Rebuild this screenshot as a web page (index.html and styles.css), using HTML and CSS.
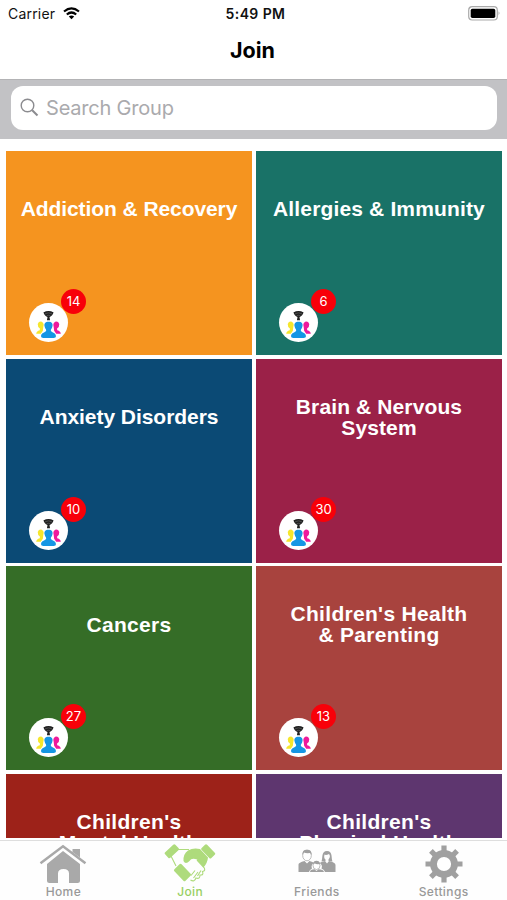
FILE: index.html
```html
<!DOCTYPE html>
<html lang="en">
<head>
<meta charset="utf-8">
<title>Join</title>
<link rel="stylesheet" href="styles.css">
</head>
<body>
<svg class="defs" aria-hidden="true">
  <symbol id="group" viewBox="0 0 38 38">
    <path fill="#222" d="M14 9.300Q19 6.500 24 9.300L22.700 11.800Q21.500 13.300 20 13.600L20.500 16.800H17.500L18 13.600Q16.500 13.300 15.300 11.800Z"/>
    <path d="M15.500 10.600Q19 8.600 22.500 10.600M17.200 12.400Q19 11.500 20.800 12.400" fill="none" stroke="#666" stroke-width=".6"/>
    <path fill="#f5e62d" d="M8.500 20.500Q9.500 17.500 12.500 18.200Q15 19.700 14 23L13.500 27L11.500 30H7Q7 27.500 10.500 26.500Q11.500 25 9 23.500Z"/>
    <path fill="#ee1a9c" d="M29.500 20.500Q28.500 17.500 25.500 18.200Q23 19.700 24 23L24.500 27L26.500 30H31Q31 27.500 27.500 26.500Q26.500 25 29 23.500Z"/>
    <path fill="#1596e4" d="M19 18.200C22.200 18.200 23.400 20 22.900 22.500C22.700 24.500 21.500 25.500 21.200 26.500C21.500 29 26.300 28.300 26.300 32.500Q26.300 34 24 34H14Q11.700 34 11.700 32.500C11.700 28.300 16.500 29 16.800 26.500C16.500 25.500 15.300 24.500 15.100 22.500C14.600 20 15.800 18.200 19 18.200Z"/>
  </symbol>
</svg>
<div class="screen">
  <header class="status">
    <div class="carrier"><span>Carrier</span>
      <svg width="17" height="13" viewBox="0 0 17 13" fill="none" stroke="#000" stroke-width="2.200"><path d="M1 4.500Q8.500-1.700 16 4.500M3.800 7.500Q8.500 3.500 13.200 7.500"/><path fill="#000" stroke="none" d="M5.800 9.500Q8.500 7.600 11.200 9.500L8.500 12.300Z"/></svg>
    </div>
    <div class="time">5:49 PM</div>
    <svg class="battery" width="33" height="15" viewBox="0 0 33 15"><rect x=".7" y=".7" width="28.600" height="13.300" rx="3.500" fill="#fff" stroke="#aaa" stroke-width="1.200"/><rect x="2.700" y="2.700" width="24.600" height="9.300" rx="1.700"/><path d="M30.700 5.200Q32.500 7.300 30.700 9.500Z" fill="#888"/></svg>
  </header>
  <h1>Join</h1>
  <div class="search">
    <div class="field">
      <svg width="20" height="20" viewBox="0 0 20 20" fill="none" stroke="#8b8b8f"><circle cx="7.500" cy="7.500" r="6.300" stroke-width="1.400"/><path d="M12.200 12.200L17.500 17.500" stroke-width="2"/></svg>
      <span>Search Group</span>
    </div>
  </div>
  <main class="grid">
    <section class="card orange"><h2>Addiction &amp; Recovery</h2><div class="members"><svg><use href="#group"/></svg><b>14</b></div></section>
    <section class="card teal"><h2>Allergies &amp; Immunity</h2><div class="members"><svg><use href="#group"/></svg><b>6</b></div></section>
    <section class="card blue"><h2>Anxiety Disorders</h2><div class="members"><svg><use href="#group"/></svg><b>10</b></div></section>
    <section class="card wine"><h2>Brain &amp; Nervous<br>System</h2><div class="members"><svg><use href="#group"/></svg><b>30</b></div></section>
    <section class="card green"><h2>Cancers</h2><div class="members"><svg><use href="#group"/></svg><b>27</b></div></section>
    <section class="card rust"><h2>Children's Health<br>&amp; Parenting</h2><div class="members"><svg><use href="#group"/></svg><b>13</b></div></section>
    <section class="card red"><h2>Children's<br>Mental Health</h2></section>
    <section class="card purple"><h2>Children's<br>Physical Health</h2></section>
  </main>
  <nav class="tabs">
    <div class="tab">
      <svg width="48" height="40" viewBox="0 0 48 40"><path d="M1.500 19.200L24 2.200L46.500 19.200" fill="none" stroke="#a9a9a9" stroke-width="2.500"/><path fill="#a9a9a9" d="M24 7L41 20V36.500Q41 39 38.500 39H30V29.500Q30 25 24.500 25Q19 25 19 29.500V39H10.500Q8 39 8 36.500V20ZM33.500 5H41V13.500L33.500 8Z"/></svg>
      <span>Home</span>
    </div>
    <div class="tab active">
      <svg width="52" height="40" viewBox="0 0 52 40" fill="#aedb7c"><rect x="-7" y="-3.800" width="14" height="7.600" rx="1.500" transform="translate(7.800 7.200) rotate(-43)"/><rect x="-7" y="-3.800" width="14" height="7.600" rx="1.500" transform="translate(44.200 7.400) rotate(46)"/><rect x="-8" y="-5" width="16" height="10" rx="1.500" transform="translate(18.500 28.500) rotate(46)"/><path d="M19.500 17Q19 10 24 6.500Q29 3.500 36 5L44 13.500Q43.500 19 39.500 23.500L33 15.500Q27.500 13.500 25.500 17Q21.500 21 19.500 17Z"/><path d="M12 5.500L25 5.500M7 12L12 22M33 16L40 23.500Q42 27 38.500 27.500Q40 31.500 36 31Q36 35.500 32 34Q30.500 38.500 26.500 36M27 31.500L31 26.500M29.500 34L34 28M33.500 32L37 26.500" fill="none" stroke="#aedb7c" stroke-width="1.100"/></svg>
      <span>Join</span>
    </div>
    <div class="tab">
      <svg width="38" height="40" viewBox="0 0 38 40" fill="#a0a0a0"><ellipse cx="9" cy="11.500" rx="4.300" ry="5.300" fill="#fff" stroke="#a0a0a0" stroke-width=".7"/><path d="M4.400 11Q4 5.500 9 5.700Q14 5.500 13.600 11L12 9Q8 9.500 6 8.500ZM.5 28V20.500Q.5 18.500 6.500 17L9 19.500L11.500 17Q15 18 16 19Q12.500 21 14 24.500Q11.500 25.500 11 28Z"/><path d="M23.500 17.500C25 14 23 7 29 7C35 7 33 14 34.500 17.500L30.500 17V15.500Q33 12.500 31 10Q28 11.500 26.500 10.500Q25.500 14 27.500 15.500V17Z"/><path d="M21.500 19Q23 18 27 17L29 19.500L31 17Q37.500 18.500 37.500 21V28H27Q26.500 25.500 23.500 24.500Q25 21 21.500 19Z"/><ellipse cx="18.500" cy="21.500" rx="3.500" ry="4" fill="#fff" stroke="#a0a0a0" stroke-width=".7"/><path d="M15 20Q15.500 16.700 18.500 16.700Q21.500 16.700 22 20Q18 20.500 17 19.500ZM12 28Q12 25.500 16.500 25.300L18.500 27L20.500 25.300Q25.500 25.500 26 28Z"/></svg>
      <span>Friends</span>
    </div>
    <div class="tab">
      <svg width="38" height="40" viewBox="-19 -20 38 40"><g stroke="#a0a0a0" stroke-width="5.200"><path d="M0-18.500V-9M0 18.500V9M-18.500 0H-9M18.500 0H9M-13.100-13.100L-7-7M13.100 13.100L7 7M13.100-13.100L7-7M-13.100 13.100L-7 7"/></g><circle r="10.500" fill="#fff" stroke="#a0a0a0" stroke-width="6.800"/></svg>
      <span>Settings</span>
    </div>
  </nav>
</div>
</body>
</html>
```
FILE: styles.css
```css
* { box-sizing: border-box; }
body { margin: 0; background: #fff; font-family: Inter, "Liberation Sans", sans-serif; }
.defs { display: none; }
.screen { height: 900px; display: flex; flex-direction: column; overflow: hidden; }
svg { display: block; flex: none; }
.status { height: 27px; flex: none; display: grid; grid-template-columns: 1fr auto 1fr; align-items: center; padding: 0 6px 0 8px; font-size: 14px; color: #111; }
.carrier { display: flex; align-items: center; gap: 8px; letter-spacing: .2px; }
.time { font-weight: 600; letter-spacing: .4px; padding-left: 2px; }
.battery { justify-self: end; }
h1 { flex: none; height: 52px; margin: 0; padding-right: 2px; text-align: center; font-size: 21.500px; font-weight: 700; line-height: 46px; letter-spacing: 0; }
.search { flex: none; height: 60px; padding: 6px 10px 10px 11px; background: #c2c2c5; border-top: 1px solid #b3b3b5; }
.field { height: 44px; display: flex; align-items: center; gap: 6px; padding-left: 9px; border-radius: 12px; background: #fff; color: #aaaaad; font-size: 20px; letter-spacing: -.2px; }
.grid { flex: none; height: 698.500px; margin-bottom: 2px; padding: 12px 5px 0 6px; overflow: hidden; display: grid; grid-template-columns: 1fr 1fr; grid-auto-rows: 204px; gap: 3.600px 4px; align-content: start; }
.card { display: flex; flex-direction: column; color: #fff; }
.card h2 { height: 116px; flex: none; margin: 0; display: flex; align-items: center; justify-content: center; text-align: center; font: bold 21px/21px "Liberation Sans", sans-serif; letter-spacing: .3px; }
.members { display: flex; margin: 22px 0 0 23px; }
.members svg { width: 39px; height: 39px; margin-top: 14px; border-radius: 50%; background: #fff; }
.members b { width: 25px; height: 25px; margin-left: -7px; border-radius: 50%; background: #f80009; font-size: 13px; line-height: 25px; font-weight: 400; text-align: center; }
.orange { background: #f5941f; }
.teal { background: #197267; }
.blue { background: #0b4a75; }
.wine { background: #9b2148; }
.green { background: #356d27; }
.rust { background: #a8433e; }
.red { background: #9d2219; }
.purple { background: #5e366f; }
.orange h2 { height: 115px; margin-bottom: 1px; letter-spacing: -.08px; }
.teal h2 { height: 115px; margin-bottom: 1px; letter-spacing: .15px; }
.blue h2 { letter-spacing: -.05px; }
.wine h2 { letter-spacing: .12px; }
.tabs { flex: 1; display: grid; grid-template-columns: repeat(4, 1fr); border-top: 1px solid #dedede; background: #fefefe; }
.tab { display: flex; flex-direction: column; align-items: center; padding-top: 3px; color: #999; font-size: 12px; line-height: 15px; font-weight: 500; letter-spacing: .4px; }
.tab.active { color: #98cf62; }
```
